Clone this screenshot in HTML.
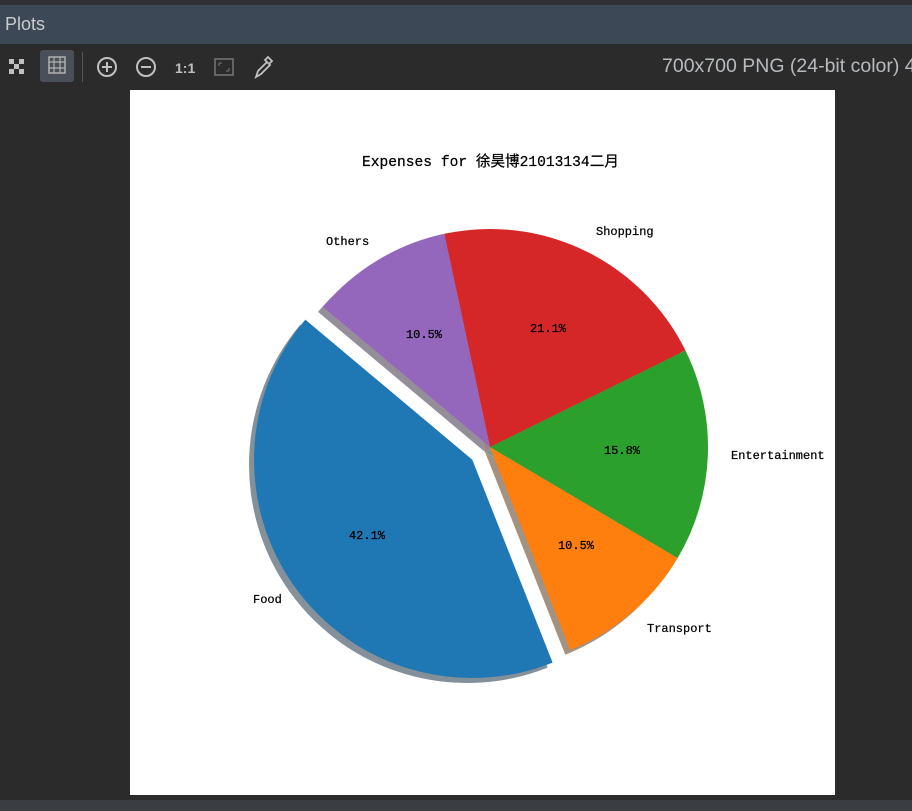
<!DOCTYPE html>
<html><head><meta charset="utf-8"><style>
html,body{margin:0;padding:0;width:912px;height:811px;overflow:hidden;background:#2b2b2b;font-family:"Liberation Sans",sans-serif}
.top{position:absolute;left:0;top:0;width:912px;height:5px;background:#2f3133}
.hdr{position:absolute;left:0;top:5px;width:912px;height:39px;background:#3c4856;color:#c8ccd0;font-size:18px;line-height:39px;padding-left:5px;box-sizing:border-box}
.tb{position:absolute;left:0;top:44px;width:912px;height:46px;background:#2b2b2b}
.info{position:absolute;left:662px;color:#b8bbbe;font-size:19.5px;white-space:nowrap}
.img{position:absolute;left:130px;top:90px;width:705px;height:705px;background:#fff}
.bot{position:absolute;left:0;top:800px;width:912px;height:11px;background:#3a3e42}
</style></head><body>
<div class="top"></div>
<div class="hdr">Plots</div>
<div class="tb">
<svg width="300" height="46" style="position:absolute;left:0;top:0">
<g fill="#c0c0c0">
<rect x="9" y="15" width="5" height="5"/><rect x="19" y="15" width="5" height="5"/><rect x="14" y="20" width="5" height="5"/><rect x="9" y="25" width="5" height="5"/><rect x="19" y="25" width="5" height="5"/>
</g>
<rect x="40" y="6" width="34" height="32" rx="3" fill="#4b5058"/>
<rect x="49" y="13" width="16" height="16" fill="none" stroke="#b0b0b0" stroke-width="1.5"/>
<path d="M49 18H65M49 24H65M54 13V29M60 13V29" stroke="#b0b0b0" stroke-width="1.2"/>
<rect x="82" y="8" width="1" height="30" fill="#555"/>
<circle cx="107" cy="23" r="9" fill="none" stroke="#c0c0c0" stroke-width="2"/>
<path d="M102 23H112M107 18V28" stroke="#c0c0c0" stroke-width="2"/>
<circle cx="146" cy="23" r="9" fill="none" stroke="#c0c0c0" stroke-width="2"/>
<path d="M141 23H151" stroke="#c0c0c0" stroke-width="2"/>
<text x="175" y="29" fill="#c0c0c0" font-size="14" font-weight="bold" font-family="Liberation Sans">1:1</text>
<rect x="215" y="15" width="18" height="16" fill="none" stroke="#777" stroke-width="1.5"/>
<path d="M219 19h3M219 19v3M229 27h-3M229 27v-3" stroke="#777" stroke-width="1"/>
<path d="M256 33l2-6 9-9 3 3-9 9z M265 16l3-3 4 4-3 3z" fill="none" stroke="#c0c0c0" stroke-width="1.8"/>
</svg>
<div class="info" style="top:11px">700x700 PNG (24-bit color) 4</div>
</div>
<div class="img"></div>
<svg width="912" height="811" style="position:absolute;left:0;top:0">
<g transform="translate(-5,5)" opacity="0.5">
<path d="M472.3 459.8L305.3 319.6A218 218 0 0 0 552.6 662.6Z" fill="rgb(9,36,54)"/>
<path d="M490 447L570.3 649.7A218 218 0 0 0 677.7 558Z" fill="rgb(77,38,4)"/>
<path d="M490 447L677.7 558A218 218 0 0 0 685.4 350.4Z" fill="rgb(13,48,13)"/>
<path d="M490 447L685.4 350.4A218 218 0 0 0 444.3 233.8Z" fill="rgb(64,12,12)"/>
<path d="M490 447L444.3 233.8A218 218 0 0 0 323 306.9Z" fill="rgb(44,31,57)"/>
</g>
<path d="M472.3 459.8L305.3 319.6A218 218 0 0 0 552.6 662.6Z" fill="#1f77b4"/>
<path d="M490 447L570.3 649.7A218 218 0 0 0 677.7 558Z" fill="#ff7f0e"/>
<path d="M490 447L677.7 558A218 218 0 0 0 685.4 350.4Z" fill="#2ca02c"/>
<path d="M490 447L685.4 350.4A218 218 0 0 0 444.3 233.8Z" fill="#d62728"/>
<path d="M490 447L444.3 233.8A218 218 0 0 0 323 306.9Z" fill="#9467bd"/>
<g font-family="Liberation Mono,'Noto Sans CJK SC',monospace" font-size="12" fill="#000" stroke="#000" stroke-width="0.25">
<text x="362" y="166" font-size="14.6">Expenses for 徐昊博21013134二月</text>
<text x="326" y="245">Others</text>
<text x="596" y="235">Shopping</text>
<text x="731" y="459">Entertainment</text>
<text x="647" y="632">Transport</text>
<text x="253" y="603">Food</text>
<g text-anchor="middle">
<text x="367" y="539">42.1%</text>
<text x="424" y="338">10.5%</text>
<text x="548" y="332">21.1%</text>
<text x="622" y="454">15.8%</text>
<text x="576" y="549">10.5%</text>
</g>
</g>
</svg>
<div class="bot"></div>
</body></html>
